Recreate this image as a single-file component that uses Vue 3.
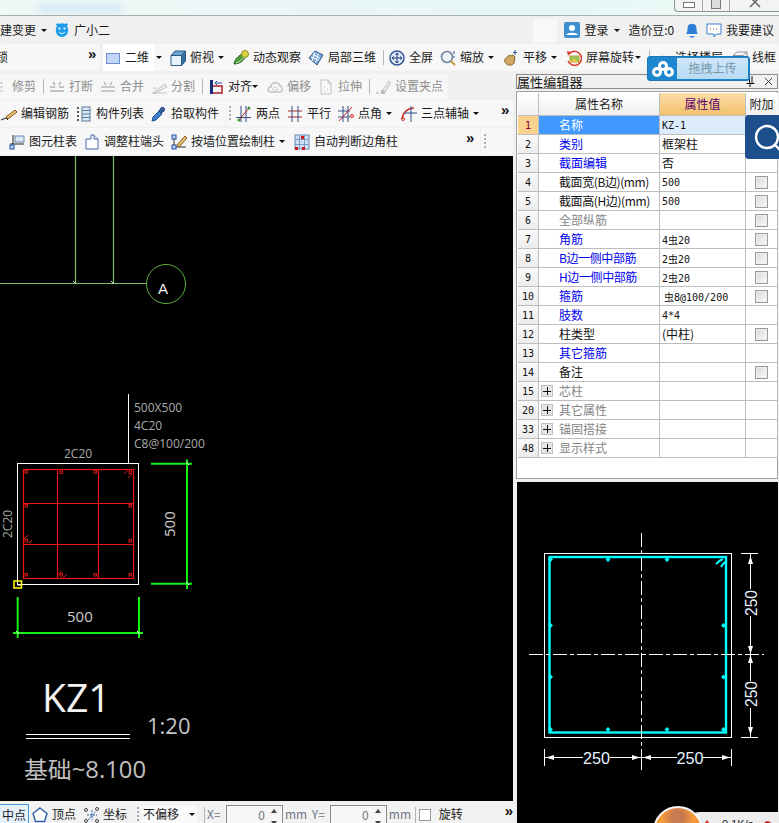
<script setup>
const icons = {
  rect2d: '<rect x="1.5" y="3.5" width="13" height="10" fill="#c4d6f5" stroke="#6b8ed0"/>',
  cube: '<path d="M1 5.5h10.5V15.5H1z" fill="#e6f1fa" stroke="#2c5a85"/><path d="M1 5.500l4-4.500h10.500l-4 4.500z" fill="#6fa3d0" stroke="#2c5a85"/><path d="M11.500 5.500l4-4.500v10l-4 4.500z" fill="#2f6da3" stroke="#2c5a85"/>',
  orbit: '<path d="M1 14C2 8 7 4 13 3c0 6-5 11-12 11z" fill="#4f9a3c" stroke="#2b6b25"/><circle cx="12" cy="4" r="3.500" fill="#d8d040" stroke="#8c8a20"/><path d="M3 13c3-1 6-3 8-6" stroke="#cfe8b8" fill="none"/>',
  local3d: '<path d="M1 8l6-7 8 4-6 10z" fill="#7ba7dd" stroke="#2c5a85"/><path d="M5 4.500l7 3.500M3 7l8 3.500M7 2l-3 9M10.500 3.500l-3 9" stroke="#fff" fill="none"/>',
  full: '<circle cx="8" cy="8" r="7" fill="#dfe8f6" stroke="#33569a" stroke-width="1.500"/><path d="M8 3v10M3 8h10M8 3L6.500 5M8 3l1.500 2M8 13l-1.500-2M8 13l1.500-2M3 8l2-1.500M3 8l2 1.500M13 8l-2-1.500M13 8l-2 1.500" stroke="#1f3f80" fill="none"/>',
  zoom: '<circle cx="7" cy="7" r="5.500" fill="#eef3fb" stroke="#6d7f98" stroke-width="1.500"/><path d="M11 11l4 4" stroke="#c49a30" stroke-width="2"/><path d="M14 1v3M14 6v2" stroke="#33569a"/>',
  pan: '<path d="M2 12c-1-3 1-5 3-5l1-2 2 1 2-1 2 2-1 6c-2 3-7 3-9-1z" fill="#d2a860" stroke="#8a6a30"/><path d="M12 0v5M10 2.500h4" stroke="#33569a"/>',
  rotate: '<path d="M3 4a7 7 0 1 1-1 7" fill="none" stroke="#d83c30" stroke-width="1.500"/><path d="M1 1l4 1-3 4z" fill="#d83c30"/><rect x="4" y="6" width="9" height="6" fill="#8cc860" stroke="#d0a030"/><path d="M4 12l4-4 4 4" fill="#e8c040"/>',
  floor: '<path d="M1 11l7-5 7 5-7 4z" fill="#3d9a4a" stroke="#1f6a2c"/>',
  wire: '<path d="M1 5.500h10V14H1zM1 5.500L5 2h10l-4 3.500M11 14l4-4V2" fill="none" stroke="#8f96a0"/>',
  trim: '<path d="M2 1v14M4 8h7M6 4h5M6 12h5" stroke="#bbb" fill="none"/>',
  brk: '<path d="M1 8h5M10 8h5M1 12h14M4 3l2 3M12 3l-2 3" stroke="#b4b4b4" stroke-width="1.500" fill="none"/>',
  merge: '<path d="M1 8h14M1 12h14M4 3l2 3M12 3l-2 3" stroke="#bcbcbc" stroke-width="1.500" fill="none"/>',
  split: '<path d="M1 14h15M2 14l12-9 2 3-12 6zM2 9h4" stroke="#c0c0c0" fill="#eee"/>',
  align: '<path d="M3.500 1v14" stroke="#14307a" stroke-width="3"/><path d="M5 7h9v7H5" fill="none" stroke="#b02020" stroke-width="1.500"/><path d="M14 4H7M9 2L7 4l2 2" fill="none" stroke="#2050a0"/>',
  offset: '<path d="M3 13c-3-1-2-5 1-5 0-5 8-6 9-1 3 0 3 6 0 6z" fill="none" stroke="#c4c4c4" stroke-width="1.500"/><path d="M6 11c-1-1 0-3 2-3s3 1 3 3z" fill="none" stroke="#d0d0d0"/>',
  stretch: '<path d="M3 1h7l3 3v11H3z" fill="#f8f8f8" stroke="#c0c0c0"/><path d="M10 1v3h3M6 8h1M9 10h1M6 12h1" stroke="#bbb" fill="none"/>',
  grip: '<path d="M1 14h3M6 14h3" stroke="#aaa"/><rect x="6" y="11" width="4" height="4" fill="#bbb"/><path d="M8 11l6-9 2 2-6 9z" fill="#e8e8e8" stroke="#c0c0c0"/>',
  rebar: '<path d="M0 14l5-2 2 2" stroke="#222" fill="none"/><path d="M5 11l9-7 2 2-9 7z" fill="#e6c070" stroke="#8a5a20"/><path d="M14 4l2 2" stroke="#a02020"/>',
  list: '<path d="M1 2h2M1 6h2M1 10h2M1 14h2" stroke="#555" stroke-width="2"/><rect x="6" y="1" width="8" height="14" fill="#dce8f6" stroke="#5a7a9a"/><path d="M6 4.500h8M6 8h8M6 11.500h8" stroke="#5a7a9a"/>',
  pick: '<path d="M1 15l1-4 6-6 3 3-6 6z" fill="#3f7fd0" stroke="#1f4f90"/><path d="M8 5l2-3c2-2 5 1 3 3l-3 2z" fill="#2f5f9f" stroke="#1f3f70"/>',
  two: '<path d="M0 11.500h15M5 0v16M10 0v16" stroke="#30508a" fill="none"/><path d="M14 1L2 15" stroke="#b82020"/><circle cx="3" cy="14" r="1.500" fill="#3c9030"/><circle cx="13" cy="2" r="1.500" fill="#3c9030"/>',
  par: '<path d="M1 5h14M1 11h14" stroke="#a02828" fill="none"/><path d="M5 0v16M11 0v16" stroke="#30508a" fill="none"/>',
  angle: '<path d="M0 5h12M0 11h12M5 0v16M10 0v16" stroke="#30508a" fill="none"/><path d="M14 1L1 15" stroke="#d02020"/><circle cx="14" cy="10" r="1.500" fill="none" stroke="#d02020"/>',
  arc: '<path d="M1 13C2 6 7 2 13 2" fill="none" stroke="#d03028" stroke-width="1.500"/><path d="M10 0v16M3 7h13" stroke="#30508a" fill="none"/><circle cx="2" cy="13" r="1.500" fill="none" stroke="#d03028"/>',
  table: '<path d="M4 1v9M1 10h14" stroke="#222" fill="none"/><rect x="6" y="2" width="9" height="6" fill="#dce8f6" stroke="#6a8ab0"/><rect x="1" y="11" width="4" height="4" fill="#bcd2f0" stroke="#2050b0"/>',
  adjust: '<path d="M2 5h5V1h3l4 4v10H2z" fill="#fff" stroke="#4868a8"/><path d="M10 1v4h4" fill="#dce8f6" stroke="#4868a8"/>',
  draw: '<rect x="1" y="1" width="4" height="4" fill="#bcd2f0" stroke="#2050b0"/><rect x="1" y="11" width="4" height="4" fill="#bcd2f0" stroke="#2050b0"/><path d="M3 5v6M5 13h10" stroke="#333"/><path d="M6 11l8-9 2 2-8 9z" fill="#e6c070" stroke="#8a5a20"/>',
  auto: '<rect x="1" y="1" width="14" height="14" fill="#cfe0f6" stroke="#6a8ab0"/><path d="M5.500 1v14M10.500 1v14M1 5.500h14M1 10.500h14" stroke="#7a9ac0"/><rect x="7" y="2" width="3" height="3" fill="#d01818"/><rect x="1" y="13" width="3" height="3" fill="#d01818"/><rect x="8" y="13" width="3" height="3" fill="#d01818"/>',
  penta: '<path d="M8 1l7 5.500-2.500 8h-9L1 6.500z" fill="#fff" stroke="#2a5ea8" stroke-width="1.400"/>',
  coord: '<path d="M3 8h10M8 3v10M4 13l8-9" stroke="#2a5ea8" stroke-dasharray="2 1" fill="none"/><circle cx="2" cy="3" r="1.500" fill="none" stroke="#444"/><circle cx="13" cy="2" r="1.500" fill="none" stroke="#444"/><circle cx="2" cy="14" r="1.500" fill="none" stroke="#444"/><circle cx="13" cy="14" r="1.500" fill="none" stroke="#444"/>',
  user: '<rect width="16" height="16" rx="2" fill="#3d8fd0"/><circle cx="8" cy="6" r="3" fill="#fff"/><path d="M2 13c1-3 11-3 12 0z" fill="#fff"/>',
  bell: '<path d="M2 12c2-2 1-5 2-8 1-3 7-3 8 0 1 3 0 6 2 8z" fill="#2f7fd8"/><path d="M5 14h6l-3 2z" fill="#2f7fd8"/>',
  msg: '<path d="M1 2h14v10H10l-2 3v-3H1z" fill="#fff" stroke="#3d80d0"/><path d="M4 7h1M7 7h1M10 7h1" stroke="#555"/>',
  mascot: '<path d="M3 4C1 2 3 0 5 2c2-1 4-1 6 0 2-2 4 0 2 2 3 5 0 11-5 11S0 9 3 4z" fill="#1f9ef0"/><circle cx="5.500" cy="6.500" r="1.100" fill="#fff"/><circle cx="10.500" cy="6.500" r="1.100" fill="#fff"/><path d="M5 10c1.500 2 4.500 2 6 0" stroke="#fff" fill="none"/>'
}

const bandsOf = (bands) =>
  bands.map((b) => ({
    ...b,
    items: b.items.map((it, i) => ({
      ...it,
      w: (b.items[i + 1] ? b.items[i + 1].x : b.x + b.w) - it.x,
      ml: i === 0 ? it.x - b.x : 0
    }))
  }))

const mainRow = bandsOf([
  { x: 0, w: 100, items: [{ x: -4, label: '锁' }, { x: 88, more: true }] },
  { x: 103, w: 676, items: [
    { x: 103, icon: 'rect2d', label: '二维', active: true }, { x: 154, arrow: true, box: true },
    { x: 170, icon: 'cube', label: '俯视' }, { x: 218, arrow: true },
    { x: 233, icon: 'orbit', label: '动态观察' },
    { x: 308, icon: 'local3d', label: '局部三维' }, { x: 383, sep: true },
    { x: 389, icon: 'full', label: '全屏' },
    { x: 440, icon: 'zoom', label: '缩放' }, { x: 488, arrow: true },
    { x: 503, icon: 'pan', label: '平移' }, { x: 551, arrow: true },
    { x: 566, icon: 'rotate', label: '屏幕旋转' }, { x: 635, arrow: true }, { x: 649, sep: true },
    { x: 655, icon: 'floor', label: '选择楼层' },
    { x: 732, icon: 'wire', label: '线框' }
  ] }
])

const row2 = bandsOf([
  { x: 0, w: 448, items: [
    { x: -8, icon: 'trim', label: '修剪', grey: true }, { x: 43, sep: true },
    { x: 49, icon: 'brk', label: '打断', grey: true },
    { x: 100, icon: 'merge', label: '合并', grey: true },
    { x: 151, icon: 'split', label: '分割', grey: true }, { x: 202, sep: true },
    { x: 208, icon: 'align', label: '对齐' }, { x: 252, arrow: true },
    { x: 267, icon: 'offset', label: '偏移', grey: true },
    { x: 318, icon: 'stretch', label: '拉伸', grey: true }, { x: 369, sep: true },
    { x: 375, icon: 'grip', label: '设置夹点', grey: true }
  ] }
])

const row3 = bandsOf([
  { x: 0, w: 225, items: [
    { x: 1, icon: 'rebar', label: '编辑钢筋' },
    { x: 76, icon: 'list', label: '构件列表' },
    { x: 151, icon: 'pick', label: '拾取构件' }
  ] },
  { x: 226, w: 287, items: [
    { x: 229, grip: true },
    { x: 236, icon: 'two', label: '两点' },
    { x: 287, icon: 'par', label: '平行' },
    { x: 338, icon: 'angle', label: '点角' }, { x: 386, arrow: true },
    { x: 401, icon: 'arc', label: '三点辅轴' }, { x: 473, arrow: true },
    { x: 501, more: true }
  ] }
])

const row4 = bandsOf([
  { x: 0, w: 480, items: [
    { x: 9, icon: 'table', label: '图元柱表' },
    { x: 84, icon: 'adjust', label: '调整柱端头' },
    { x: 171, icon: 'draw', label: '按墙位置绘制柱' }, { x: 279, arrow: true },
    { x: 294, icon: 'auto', label: '自动判断边角柱' },
    { x: 466, more: true }
  ] },
  { x: 481, w: 32, items: [{ x: 484, grip: true }] }
])

const rows = [
  { n: 1, name: '名称', c: 'sel', val: 'KZ-1', mono: true, selected: true },
  { n: 2, name: '类别', c: 'blue', val: '框架柱' },
  { n: 3, name: '截面编辑', c: 'blue', val: '否' },
  { n: 4, name: '截面宽(B边)(mm)', c: 'tight', val: '500', mono: true, chk: true },
  { n: 5, name: '截面高(H边)(mm)', c: 'tight', val: '500', mono: true, chk: true },
  { n: 6, name: '全部纵筋', c: 'grey', val: '', chk: true },
  { n: 7, name: '角筋', c: 'blue', val: '4虫20', mono: true, chk: true },
  { n: 8, name: 'B边一侧中部筋', c: 'blue tight', val: '2虫20', mono: true, chk: true },
  { n: 9, name: 'H边一侧中部筋', c: 'blue tight', val: '2虫20', mono: true, chk: true },
  { n: 10, name: '箍筋', c: 'blue', val: '虫8@100/200', mono: true, chk: true, indent: true },
  { n: 11, name: '肢数', c: 'blue', val: '4*4', mono: true },
  { n: 12, name: '柱类型', c: '', val: '(中柱)', chk: true },
  { n: 13, name: '其它箍筋', c: 'blue', val: '' },
  { n: 14, name: '备注', c: '', val: '', chk: true },
  { n: 15, name: '芯柱', c: 'grey', val: '', plus: true },
  { n: 20, name: '其它属性', c: 'grey', val: '', plus: true },
  { n: 33, name: '锚固搭接', c: 'grey', val: '', plus: true },
  { n: 48, name: '显示样式', c: 'grey', val: '', plus: true }
]

const colBars = [
  [26, 472], [61, 472.5], [95, 472], [130, 472.500],
  [26, 506], [130, 506], [26, 541], [130, 541],
  [26, 575], [61, 575], [95, 575], [130, 575]
]
const cyanDots = [
  [608, 559.5], [667, 559.5], [550.5, 625.5], [723.5, 625.5], [550.5, 677], [723.5, 677],
  [608, 729.5], [667, 729.5], [550.5, 729.5], [723.5, 729.5], [550.5, 559.5]
]
</script>

<template>
  <div class="app">
    <header class="titlebar">
      <div class="blob"></div>
      <div class="winctl">
        <span class="wbtn w1"><i class="min"></i></span>
        <span class="wbtn w2"><i class="rest"></i></span>
        <span class="wbtn w3">
          <svg viewBox="0 0 12 10" width="12" height="10"><path d="M1 -3L11 7M11 -3L1 7" stroke="#666" stroke-width="1.500"/></svg>
        </span>
      </div>
    </header>

    <nav class="menubar">
      <span class="mtext">建变更</span>
      <span class="caret cm1"></span>
      <svg class="ic m-mascot" viewBox="0 0 16 16" v-html="icons.mascot"></svg>
      <span class="mtext m-name">广小二</span>
      <span class="spacer"></span>
      <span class="lightbox"></span>
      <svg class="ic" viewBox="0 0 16 16" v-html="icons.user"></svg>
      <span class="mtext m-login">登录</span>
      <span class="caret cm2"></span>
      <span class="mtext m-bean">造价豆:0</span>
      <svg class="ic m-bell" viewBox="0 0 16 16" v-html="icons.bell"></svg>
      <svg class="ic m-msg" viewBox="0 0 16 16" v-html="icons.msg"></svg>
      <span class="mtext m-sug">我要建议</span>
    </nav>

    <div class="tbrow main-row">
      <div v-for="b in mainRow" :key="b.x" class="band" :style="{ width: b.w + 'px' }">
        <div v-for="it in b.items" :key="it.x" class="tool" :class="{ active: it.active, grey: it.grey }" :style="{ width: it.w + 'px', marginLeft: it.ml + 'px' }">
          <svg v-if="it.icon" class="ic" viewBox="0 0 16 16" v-html="icons[it.icon]"></svg>
          <span v-if="it.label" class="lbl">{{ it.label }}</span>
          <span v-if="it.arrow" class="caret" :class="{ boxed: it.box }"></span>
          <span v-if="it.sep" class="sep"></span>
          <span v-if="it.more" class="more">»</span>
        </div>
      </div>
    </div>

    <div class="body">
      <section class="left">
        <div v-for="(row, ri) in [row2, row3, row4]" :key="ri" class="tbrow" :class="'r' + ri">
          <div v-for="b in row" :key="b.x" class="band" :style="{ width: b.w + 'px' }">
            <div v-for="it in b.items" :key="it.x" class="tool" :class="{ grey: it.grey }" :style="{ width: it.w + 'px', marginLeft: it.ml + 'px' }">
              <svg v-if="it.icon" class="ic" viewBox="0 0 16 16" v-html="icons[it.icon]"></svg>
              <span v-if="it.label" class="lbl">{{ it.label }}</span>
              <span v-if="it.arrow" class="caret"></span>
              <span v-if="it.sep" class="sep"></span>
              <span v-if="it.more" class="more">»</span>
              <span v-if="it.grip" class="gripbar"></span>
            </div>
          </div>
        </div>

        <svg class="cad" viewBox="0 156 513 645" width="513" height="645">
          <g stroke="#7fbf5f" fill="none" stroke-width="1.200">
            <path d="M75.500 156V283M113.500 156V283M0 283.500H147"/>
            <circle cx="166" cy="284" r="19.500" stroke="#5fb040" stroke-width="1"/>
          </g>
          <path d="M73 281l3 3M111 281l3 3" stroke="#ddd"/>
          <text x="158" y="294" class="t-a">A</text>

          <path d="M128.500 394V463" stroke="#fff"/>
          <text x="134" y="412" class="t-note">500X500</text>
          <text x="134" y="430" class="t-note">4C20</text>
          <text x="134" y="448" class="t-note">C8@100/200</text>
          <text x="64" y="458" class="t-note">2C20</text>
          <text transform="translate(12 538) rotate(-90)" class="t-note">2C20</text>

          <rect x="17.500" y="463.500" width="121" height="121" fill="none" stroke="#fff"/>
          <g stroke="#f01414" fill="none" stroke-width="1.200">
            <rect x="23.500" y="469.500" width="110" height="109"/>
            <path d="M57.500 469.500V578.500M98.500 469.500V578.500M23.500 503.500H133.500M23.500 544.500H133.500"/>
            <rect v-for="(p, i) in colBars" :key="i" :x="p[0] - 1" :y="p[1] - 1.500" width="2.500" height="2.500" stroke-width="0.900"/>
            <path d="M124 474l4-4M128 478l4-4M24 539l4-4M29 543l3-3M58 575l4-4M63 578l4-4" stroke-width="0.900"/>
          </g>

          <g stroke="#14f014" stroke-width="2" fill="none">
            <path d="M187 459.500V589M151 463.800H192M151 583.800H192"/>
            <path d="M17.700 597V638M139 597V638M13 633H143"/>
          </g>
          <path d="M186 462l3 3M186 582l3 3M16 631l3 3M137 631l3 3" stroke="#fff" fill="none"/>
          <text transform="translate(175 537) rotate(-90)" class="t-dim">500</text>
          <text x="67" y="622" class="t-dim">500</text>

          <rect x="14" y="581" width="7.500" height="7" fill="none" stroke="#ffef00" stroke-width="1.600"/>
          <path d="M17.500 581.500V585H21" stroke="#fff" fill="none"/>

          <text x="42" y="712" class="t-kz">KZ1</text>
          <path d="M26 734.500H130M26 738.500H130" stroke="#fff"/>
          <text x="147" y="734" class="t-scale">1:20</text>
          <text x="24" y="778" class="t-base" textLength="122" lengthAdjust="spacingAndGlyphs">基础~8.100</text>
        </svg>

        <footer class="status">
          <span class="st-mid">中点</span>
          <svg class="ic st-penta" viewBox="0 0 16 16" v-html="icons.penta"></svg>
          <span class="lbl st-top">顶点</span>
          <svg class="ic st-coord" viewBox="0 0 16 16" v-html="icons.coord"></svg>
          <span class="lbl st-co">坐标</span>
          <span class="gripbar st-grip"></span>
          <span class="combo"><span class="lbl">不偏移</span><span class="caret"></span></span>
          <span class="sep st-sep"></span>
          <span class="lbl fld st-x">X=</span>
          <span class="num"><span>0</span><i class="spin"></i><i class="spin down"></i></span>
          <span class="lbl fld st-mm">mm</span>
          <span class="lbl fld st-y">Y=</span>
          <span class="num"><span>0</span><i class="spin"></i><i class="spin down"></i></span>
          <span class="lbl fld st-mm">mm</span>
          <span class="sep st-sep2"></span>
          <span class="stchk"></span>
          <span class="lbl st-rot">旋转</span>
          <span class="more st-more">»</span>
        </footer>
      </section>

      <aside class="right">
        <div class="ptitle">
          <span class="ptitle-t">属性编辑器</span>
          <span class="spacer"></span>
          <svg class="pin" viewBox="0 0 9 11" width="9" height="11"><path d="M3 0v7H0.500v1H3.500V11h1V8H8.500V7H6.500V0H5.500V7H4V0z" fill="#111"/></svg>
          <svg class="px" viewBox="0 0 9 9" width="9" height="9"><path d="M1 1l7 7M8 1L1 8" stroke="#444"/></svg>
        </div>
        <div class="pbox">
          <div class="grid-row head">
            <div class="c cn"></div>
            <div class="c cname">属性名称</div>
            <div class="c cval">属性值</div>
            <div class="c cadd">附加</div>
          </div>
          <div v-for="r in rows" :key="r.n" class="grid-row">
            <div class="c cn" :class="{ cur: r.selected }">{{ r.n }}</div>
            <div class="c bname" :class="r.c">
              <span v-if="r.plus" class="plus"></span>
              <span class="nm">{{ r.name }}</span>
            </div>
            <div class="c bval" :class="{ mono: r.mono, valsel: r.selected, indent: r.indent }">{{ r.val }}</div>
            <div class="c badd"><span v-if="r.chk" class="chk"></span></div>
          </div>
        </div>

        <svg class="cad2" viewBox="517 482 261 341" width="261" height="341">
          <rect x="544.500" y="553.500" width="187" height="184" fill="none" stroke="#fff"/>
          <rect x="549.500" y="557" width="176.500" height="175.500" fill="none" stroke="#0ff" stroke-width="2.400"/>
          <path d="M529 654.500H764" stroke="#fff" stroke-dasharray="14 3 4 3" fill="none"/>
          <path d="M641.500 533V771" stroke="#fff" stroke-dasharray="14 3 4 3" fill="none"/>
          <g fill="#0ff">
            <path v-for="(p, i) in cyanDots" :key="i" :d="`M${p[0] - 2.500} ${p[1]}L${p[0]} ${p[1] - 2.500}L${p[0] + 2.500} ${p[1]}L${p[0]} ${p[1] + 2.500}z`"/>
          </g>
          <path d="M716 564c2-2 4-4 7-5M721 567c1-2 2-3 4-5" stroke="#0ff" stroke-width="2" fill="none"/>

          <g stroke="#fff" fill="none">
            <path d="M741 553.500H758M741 737.500H758M750.500 553V589M750.500 616V681M750.500 708V737"/>
            <path d="M544.500 749V766M731.500 749V766M641.500 749V766M545 757.500H583M610 757.500H677M703 757.500H731"/>
          </g>
          <g fill="#fff">
            <path d="M750.500 556l2.500 8h-5zM750.500 654l2.500-8h-5zM750.500 655l2.500 8h-5zM750.500 735l2.500-8h-5z"/>
            <path d="M546 757.500l8-2.500v5zM640 757.500l-8-2.500v5zM643 757.500l8-2.500v5zM730 757.500l-8-2.500v5z"/>
          </g>
          <text x="583" y="763.500" class="t-250" textLength="27" lengthAdjust="spacingAndGlyphs">250</text>
          <text x="676.500" y="763.500" class="t-250" textLength="27" lengthAdjust="spacingAndGlyphs">250</text>
          <text transform="translate(757 616) rotate(-90)" class="t-250" textLength="26" lengthAdjust="spacingAndGlyphs">250</text>
          <text transform="translate(757 707) rotate(-90)" class="t-250" textLength="26" lengthAdjust="spacingAndGlyphs">250</text>
        </svg>

        <div class="search-btn">
          <svg viewBox="0 0 34 44" width="34" height="44">
            <circle cx="22" cy="22" r="11" fill="none" stroke="#fff" stroke-width="2.400"/>
            <path d="M30 30l5 5" stroke="#fff" stroke-width="2.400"/>
          </svg>
        </div>

        <div class="speed">
          <span class="sp-arrow"></span>
          <span class="sp-text">0.1K/s</span>
          <span class="sp-dot"></span>
        </div>
        <div class="ball"></div>
      </aside>
    </div>

    <div class="upload">
      <span class="up-icon">
        <svg viewBox="0 0 22 16" width="22" height="16">
          <g fill="none" stroke="#fff" stroke-width="3">
            <circle cx="11" cy="5" r="3.500"/>
            <circle cx="5" cy="11" r="3.500"/>
            <circle cx="17" cy="11" r="3.500"/>
          </g>
        </svg>
      </span>
      <span class="up-text">拖拽上传</span>
    </div>
  </div>
</template>

<style>
html, body { margin: 0; background: #f0f0f0; overflow: hidden; }
</style>

<style scoped>
.app {
  position: relative;
  width: 779px;
  height: 823px;
  overflow: hidden;
  display: flex;
  flex-direction: column;
  background: #f0f0f0;
  color: #1a1a1a;
  font: 12px/1.2 "Noto Sans CJK SC", "Liberation Sans", sans-serif;
}
.spacer { flex: 1; }
.ic { width: 16px; height: 16px; flex: none; display: block; }
.lbl { white-space: nowrap; font-size: 12px; }

.titlebar {
  position: relative;
  flex: none;
  height: 15px;
  border-bottom: 1px solid #a8aeae;
  background: linear-gradient(90deg, #eef9f6 0%, #eaf6f6 40%, #e6f7f6 75%, #f2fbf8 100%);
  display: flex;
  justify-content: flex-end;
  overflow: hidden;
}
.blob {
  position: absolute;
  left: 38px;
  top: 4px;
  width: 85px;
  height: 9px;
  border-radius: 5px;
  background: #d6e8f4;
  filter: blur(3px);
}
.winctl {
  display: flex;
  height: 11px;
  width: 104px;
  border: 1px solid #8d9498;
  border-top: 0;
  border-right: 0;
  border-radius: 0 0 0 4px;
  background: #f2f4f4;
}
.wbtn { display: flex; justify-content: center; overflow: hidden; }
.w1 { width: 27px; border-right: 1px solid #aaa; }
.w2 { width: 26px; border-right: 1px solid #aaa; }
.w3 { flex: 1; }
.min { display: block; width: 10px; height: 4px; margin-top: 2px; border: 1px solid #777; background: #fff; }
.rest { display: block; width: 8px; height: 8px; margin-top: -1px; border: 1px solid #777; background: #ddd; }

.menubar {
  flex: none;
  height: 28px;
  display: flex;
  align-items: center;
  background: #f0f0f0;
  position: relative;
}
.mtext { font-size: 12px; white-space: nowrap; }
.menubar > .mtext:first-child { width: 36px; }
.cm1 { margin-left: 5px; }
.m-mascot { margin-left: 7px; }
.m-name { margin-left: 4px; }
.lightbox { width: 24px; height: 23px; background: #f8f8f8; margin-right: 7px; }
.m-login { margin-left: 4px; }
.cm2 { margin-left: 6px; }
.m-bean { margin-left: 8px; letter-spacing: -0.1px; }
.m-bell { margin-left: 10px; }
.m-msg { margin-left: 6px; }
.m-sug { margin-left: 4px; margin-right: 5px; }

.caret {
  display: inline-block;
  width: 0;
  height: 0;
  border-left: 3px solid transparent;
  border-right: 3px solid transparent;
  border-top: 3px solid #111;
  flex: none;
}
.caret.boxed { margin-left: 2px; }

.tbrow { display: flex; flex: none; gap: 1px; overflow: hidden; }
.main-row { height: 27px; gap: 3px; }
.r0 { height: 29px; padding-top: 3px; box-sizing: border-box; }
.r1 { height: 28px; }
.r2 { height: 28px; }
.band {
  flex: none;
  display: flex;
  align-items: center;
  box-sizing: border-box;
  background: #f7f7f7;
  border-radius: 2px;
}
.r0 .band { height: 25px; }
.r1 .band { height: 27px; }
.r2 .band { height: 27px; }
.tool {
  flex: none;
  box-sizing: border-box;
  display: flex;
  align-items: center;
  gap: 4px;
  height: 100%;
  white-space: nowrap;
  min-width: 0;
}
.tool.active { background: #fff; padding-left: 2px; }
.tool.grey { color: #9a9a9a; }
.tool.grey .lbl { color: #8f8f8f; }
.sep { display: block; width: 1px; height: 15px; background: #b4b4b4; flex: none; }
.more { font: 700 15px/1 "Liberation Sans", sans-serif; color: #111; margin-top: -9px; }
.gripbar {
  display: block;
  width: 2px;
  height: 16px;
  flex: none;
  background: repeating-linear-gradient(180deg, #aaa 0 2px, transparent 2px 4px);
}

.body { flex: 1; display: flex; min-height: 0; }
.left { width: 513px; flex: none; display: flex; flex-direction: column; }
.cad { display: block; flex: none; background: #000; width: 513px; height: 645px; }
.t-a { font: 15px "Liberation Sans", sans-serif; fill: #eee; }
.t-note { font: 12px "Open Sans", "Liberation Sans", sans-serif; fill: #aaa; }
.t-dim { font: 15px "Open Sans", "Liberation Sans", sans-serif; fill: #ccc; }
.t-kz { font: 39px "Open Sans", sans-serif; fill: #f2f2f2; }
.t-scale { font: 22px "Open Sans", sans-serif; fill: #c4c4c4; }
.t-base { font: 23px "Open Sans", "Noto Sans CJK SC", sans-serif; fill: #c0c0c0; }
.t-250 { font: 17px "Liberation Sans", sans-serif; fill: #e6f2ff; }

.status {
  flex: 1;
  box-sizing: border-box;
  display: flex;
  align-items: center;
  padding-top: 5px;
  background: #f2f2f2;
  overflow: hidden;
  height: 22px;
}
.st-mid {
  box-sizing: border-box;
  width: 29px;
  height: 20px;
  align-self: flex-start;
  margin-top: -2px;
  padding-left: 2px;
  line-height: 20px;
  background: #e4f0fc;
  border: 1px solid #4a9ae0;
  border-left: 0;
  flex: none;
}
.st-penta { margin-left: 3px; }
.st-top { margin-left: 4px; }
.st-coord { margin-left: 8px; }
.st-co { margin-left: 3px; }
.st-grip { margin-left: 10px; }
.combo {
  box-sizing: border-box;
  width: 56px;
  height: 18px;
  margin-left: 2px;
  padding-left: 2px;
  display: flex;
  align-items: center;
  justify-content: space-between;
  padding-right: 2px;
  background: #fafafa;
  flex: none;
}
.st-sep { margin-left: 7px; height: 16px; }
.fld { color: #6c7686; }
.st-x { margin-left: 2px; width: 19px; }
.num {
  box-sizing: border-box;
  position: relative;
  width: 57px;
  height: 22px;
  align-self: flex-start;
  margin-top: -1px;
  padding: 0 17px 3px 0;
  border: 1px solid #8a8a8a;
  border-bottom: 0;
  background: #f6f6f6;
  display: flex;
  justify-content: flex-end;
  align-items: center;
  color: #777;
  font-size: 12px;
  flex: none;
}
.spin {
  position: absolute;
  right: 5px;
  top: 3px;
  width: 0;
  height: 0;
  border-left: 3px solid transparent;
  border-right: 3px solid transparent;
  border-bottom: 4px solid #444;
}
.spin.down { top: 15px; border-bottom: 0; border-top: 4px solid #444; }
.st-mm { margin-left: 2px; width: 27px; }
.st-y { width: 18px; }
.st-sep2 { margin-left: -1px; height: 16px; }
.stchk { width: 10px; height: 10px; margin-left: 3px; border: 1px solid #999; background: #fff; flex: none; }
.st-rot { margin-left: 8px; }
.st-more { margin-left: 42px; }

.right {
  position: relative;
  width: 263px;
  margin-left: 3px;
  flex: none;
  display: flex;
  flex-direction: column;
}
.ptitle {
  box-sizing: border-box;
  height: 15px;
  width: 262px;
  margin-top: 3px;
  display: flex;
  align-items: center;
  border: 1px solid #8c8c8c;
  background: #f0f0f0;
}
.ptitle-t { font-size: 13px; letter-spacing: 0.1px; line-height: 13px; }
.pin { margin-right: 9px; flex: none; }
.px { margin-right: 4px; flex: none; }
.pbox {
  box-sizing: border-box;
  width: 262px;
  height: 388px;
  margin-top: 2px;
  padding: 1px 1px 0;
  border: 1px solid #a0a0a0;
  background: #fff;
}
.grid-row {
  display: grid;
  grid-template-columns: 21px 121px 86px 32px;
  height: 19px;
}
.grid-row.head { height: 23px; }
.c {
  box-sizing: border-box;
  border-right: 1px solid #bdbdbd;
  border-bottom: 1px solid #bdbdbd;
  display: flex;
  align-items: center;
  white-space: nowrap;
  overflow: hidden;
}
.cn {
  justify-content: center;
  font: 10px "DejaVu Sans Mono", monospace;
  background: linear-gradient(180deg, #fafafa, #ececec);
  color: #111;
}
.cn.cur { background: #fad28e; color: #800040; }
.head .c { justify-content: center; font-size: 12px; background: linear-gradient(180deg, #fff, #f0f0f0); }
.head .cval { background: linear-gradient(180deg, #fbdda8, #f3c26c); color: #5b0070; }
.head .cadd { border-right-color: #fff; }
.bname { padding-left: 20px; position: relative; font-size: 12px; color: #111; }
.bname.blue { color: #0000f0; }
.bname.grey { color: #858585; }
.bname.sel { background: #3f99ff; color: #fff; }
.bname.tight { letter-spacing: -0.4px; }
.bval { padding-left: 2px; font-size: 12px; color: #111; white-space: pre; }
.bval.mono { font: 10px "DejaVu Sans Mono", "Noto Sans CJK SC", monospace; }
.bval.valsel { background: #dcecfd; }
.bval.indent { padding-left: 4px; }
.badd { justify-content: center; }
.chk {
  box-sizing: border-box;
  display: block;
  width: 13px;
  height: 13px;
  border: 1px solid #9a9a9a;
  background: linear-gradient(135deg, #d8d8d8, #fbfbfb);
  box-shadow: inset 0 0 0 1px #eee;
}
.plus {
  position: absolute;
  left: 2px;
  top: 3px;
  box-sizing: border-box;
  width: 12px;
  height: 12px;
  border: 1px solid #c0c0c0;
  background:
    linear-gradient(#111, #111) center / 8px 1px no-repeat,
    linear-gradient(#111, #111) center / 1px 8px no-repeat,
    #e6e6e6;
}

.cad2 {
  display: block;
  flex: none;
  background: #000;
  margin-top: 3px;
  width: 261px;
  height: 341px;
  margin-left: 1px;
}

.search-btn {
  position: absolute;
  right: 0;
  top: 44px;
  width: 34px;
  height: 44px;
  background: #1c4f8c;
  border-radius: 4px 0 0 4px;
  overflow: hidden;
}
.search-btn svg { display: block; }

.ball {
  position: absolute;
  left: 137px;
  top: 735px;
  width: 46px;
  height: 46px;
  border-radius: 50%;
  background: radial-gradient(circle at 50% 20%, #c97a50 0 14%, #f49a3a 35%, #f08424 100%);
  border: 2px solid #f4f4f4;
}
.speed {
  position: absolute;
  left: 170px;
  top: 741px;
  width: 110px;
  height: 30px;
  border-radius: 14px 0 0 14px;
  background: #ececec;
  display: block;
}
.sp-arrow {
  position: absolute;
  left: 18px;
  top: 8px;
  width: 0;
  height: 0;
  border-left: 3px solid transparent;
  border-right: 3px solid transparent;
  border-bottom: 4px solid #d83030;
}
.sp-text { position: absolute; left: 36px; top: 6px; font: 11px "Liberation Sans", sans-serif; color: #222; }
.sp-dot { position: absolute; left: 78px; top: 9px; width: 7px; height: 7px; border-radius: 50%; background: #c83030; }

.upload {
  position: absolute;
  left: 647px;
  top: 56px;
  width: 103px;
  height: 25px;
  box-sizing: border-box;
  display: flex;
  background: #1f87cf;
  border-radius: 3px;
  border: 1px solid #1a78ba;
  padding: 1px 1px 1px 0;
}
.up-icon { width: 29px; display: flex; align-items: center; justify-content: center; flex: none; }
.up-text {
  flex: 1;
  display: flex;
  align-items: center;
  justify-content: center;
  font-size: 12px;
  color: #7896aa;
  background: linear-gradient(180deg, #cfe7f7, #b5dcf5);
}
</style>
